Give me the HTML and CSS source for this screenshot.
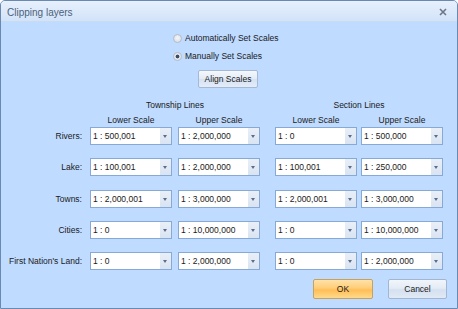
FILE: index.html
```html
<!DOCTYPE html>
<html>
<head>
<meta charset="utf-8">
<link rel="stylesheet" href="styles.css">
</head>
<body>
<div class="window">
  <div class="titlebar">
    <span class="title">Clipping layers</span>
    <svg class="close" width="8" height="8" viewBox="0 0 8 8"><path d="M1 1L7 7M7 1L1 7" stroke="#6b7689" stroke-width="1.6" fill="none"/></svg>
  </div>
  <div class="content">
    <div class="radios">
      <div class="radio-row"><span class="radio"></span><span>Automatically Set Scales</span></div>
      <div class="radio-row"><span class="radio checked"></span><span>Manually Set Scales</span></div>
    </div>
    <div class="align-row"><span class="btn align">Align Scales</span></div>
    <div class="grid">
      <div></div>
      <div class="group g1">Township Lines</div>
      <div class="group g2">Section Lines</div>

      <div></div>
      <div class="colhead">Lower Scale</div>
      <div class="colhead">Upper Scale</div>
      <div class="colhead">Lower Scale</div>
      <div class="colhead">Upper Scale</div>

      <div class="label">Rivers:</div>
      <div class="combo"><span class="val">1 : 500,001</span><span class="drop"></span></div>
      <div class="combo"><span class="val">1 : 2,000,000</span><span class="drop"></span></div>
      <div class="combo"><span class="val">1 : 0</span><span class="drop"></span></div>
      <div class="combo"><span class="val">1 : 500,000</span><span class="drop"></span></div>

      <div class="label">Lake:</div>
      <div class="combo"><span class="val">1 : 100,001</span><span class="drop"></span></div>
      <div class="combo"><span class="val">1 : 2,000,000</span><span class="drop"></span></div>
      <div class="combo"><span class="val">1 : 100,001</span><span class="drop"></span></div>
      <div class="combo"><span class="val">1 : 250,000</span><span class="drop"></span></div>

      <div class="label">Towns:</div>
      <div class="combo"><span class="val">1 : 2,000,001</span><span class="drop"></span></div>
      <div class="combo"><span class="val">1 : 3,000,000</span><span class="drop"></span></div>
      <div class="combo"><span class="val">1 : 2,000,001</span><span class="drop"></span></div>
      <div class="combo"><span class="val">1 : 3,000,000</span><span class="drop"></span></div>

      <div class="label">Cities:</div>
      <div class="combo"><span class="val">1 : 0</span><span class="drop"></span></div>
      <div class="combo"><span class="val">1 : 10,000,000</span><span class="drop"></span></div>
      <div class="combo"><span class="val">1 : 0</span><span class="drop"></span></div>
      <div class="combo"><span class="val">1 : 10,000,000</span><span class="drop"></span></div>

      <div class="label">First Nation's Land:</div>
      <div class="combo"><span class="val">1 : 0</span><span class="drop"></span></div>
      <div class="combo"><span class="val">1 : 2,000,000</span><span class="drop"></span></div>
      <div class="combo"><span class="val">1 : 0</span><span class="drop"></span></div>
      <div class="combo"><span class="val">1 : 2,000,000</span><span class="drop"></span></div>
    </div>
    <div class="footer">
      <span class="btn ok">OK</span>
      <span class="btn cancel">Cancel</span>
    </div>
  </div>
</div>
</body>
</html>
```
FILE: styles.css
```css
html, body {
  margin: 0;
  padding: 0;
  background: #ffffff;
}
body {
  font-family: "Liberation Sans", Arial, sans-serif;
  font-size: 8.5px;
  color: #1a1a1a;
}
.window {
  box-sizing: border-box;
  width: 458px;
  height: 309px;
  border: 1px solid #6a88b0;
  border-radius: 5px 5px 0 0;
  background: #bfdbff;
  display: flex;
  flex-direction: column;
  overflow: hidden;
}
.titlebar {
  height: 20px;
  flex: none;
  background: linear-gradient(#e7f0fc, #d2e3f8);
  display: flex;
  align-items: center;
  justify-content: space-between;
  padding: 0 10px 0 6px;
  border-bottom: 1px solid #c8dbf3;
}
.title {
  font-size: 10px;
  color: #4b5f7c;
  padding-top: 3px;
}
.close {
  display: block;
  margin-top: 2px;
}
.content {
  flex: 1;
  display: flex;
  flex-direction: column;
  padding-top: 7px;
}
.radios {
  display: flex;
  flex-direction: column;
  padding-left: 172px;
}
.radio-row {
  height: 18px;
  display: flex;
  align-items: center;
  gap: 3px;
}
.radio {
  box-sizing: border-box;
  width: 9px;
  height: 9px;
  border-radius: 50%;
  border: 1px solid #b4bcc8;
  background: radial-gradient(circle at 50% 40%, #f4f6f9 0%, #d5dbe3 100%);
  margin-right: 0;
}
.radio.checked {
  background: radial-gradient(circle, #3d4c61 0, #3d4c61 1.6px, #dfe4ea 2.2px, #eef1f5 100%);
}
.align-row {
  margin-top: 5px;
  padding-left: 197px;
  display: flex;
}
.btn {
  box-sizing: border-box;
  display: flex;
  align-items: center;
  justify-content: center;
  border-radius: 2px;
}
.align {
  width: 60px;
  height: 18px;
  border: 1px solid #a4b9d5;
  background: linear-gradient(#f5f8fc, #e3ebf6 50%, #d6e2f2 51%, #e4ecf7);
}
.grid {
  margin-top: 10px;
  display: grid;
  grid-template-columns: 89px 88px 97px 86px 82px;
  grid-template-rows: 15px 14px 31.25px 31.25px 31.25px 31.25px 18px;
  align-items: start;
}
.group {
  width: 170px;
  text-align: center;
  line-height: 15px;
}
.g1 { grid-column: 2 / 4; }
.g2 { grid-column: 4 / 6; width: 168px; }
.colhead {
  width: 82px;
  text-align: center;
  line-height: 14px;
}
.label {
  text-align: right;
  padding-right: 8px;
  line-height: 18px;
}
.combo {
  box-sizing: border-box;
  width: 82px;
  height: 18px;
  border: 1px solid #86a9d6;
  background: #ffffff;
  display: flex;
  align-items: stretch;
}
.val {
  flex: 1;
  padding-left: 2px;
  line-height: 16px;
  white-space: nowrap;
  overflow: hidden;
}
.drop {
  width: 11px;
  margin: 0;
  background: linear-gradient(#e9eff7, #d9e4f2);
  position: relative;
}
.drop::after {
  content: "";
  position: absolute;
  left: 3px;
  top: 7px;
  border-left: 2.5px solid transparent;
  border-right: 2.5px solid transparent;
  border-top: 3px solid #5a6d8c;
}
.footer {
  margin-top: 9px;
  display: flex;
  justify-content: flex-end;
  gap: 15px;
  padding-right: 10px;
}
.ok, .cancel {
  height: 20px;
}
.ok {
  width: 60px;
  border: 1px solid #c3a35f;
  background: linear-gradient(#ffe2a8, #ffcd78 45%, #ffbe55 55%, #ffd98c);
}
.cancel {
  width: 59px;
  border: 1px solid #a2b6d0;
  background: linear-gradient(#f2f6fb, #e3ebf5 45%, #d5e1f0 55%, #e1e9f5);
}
```
